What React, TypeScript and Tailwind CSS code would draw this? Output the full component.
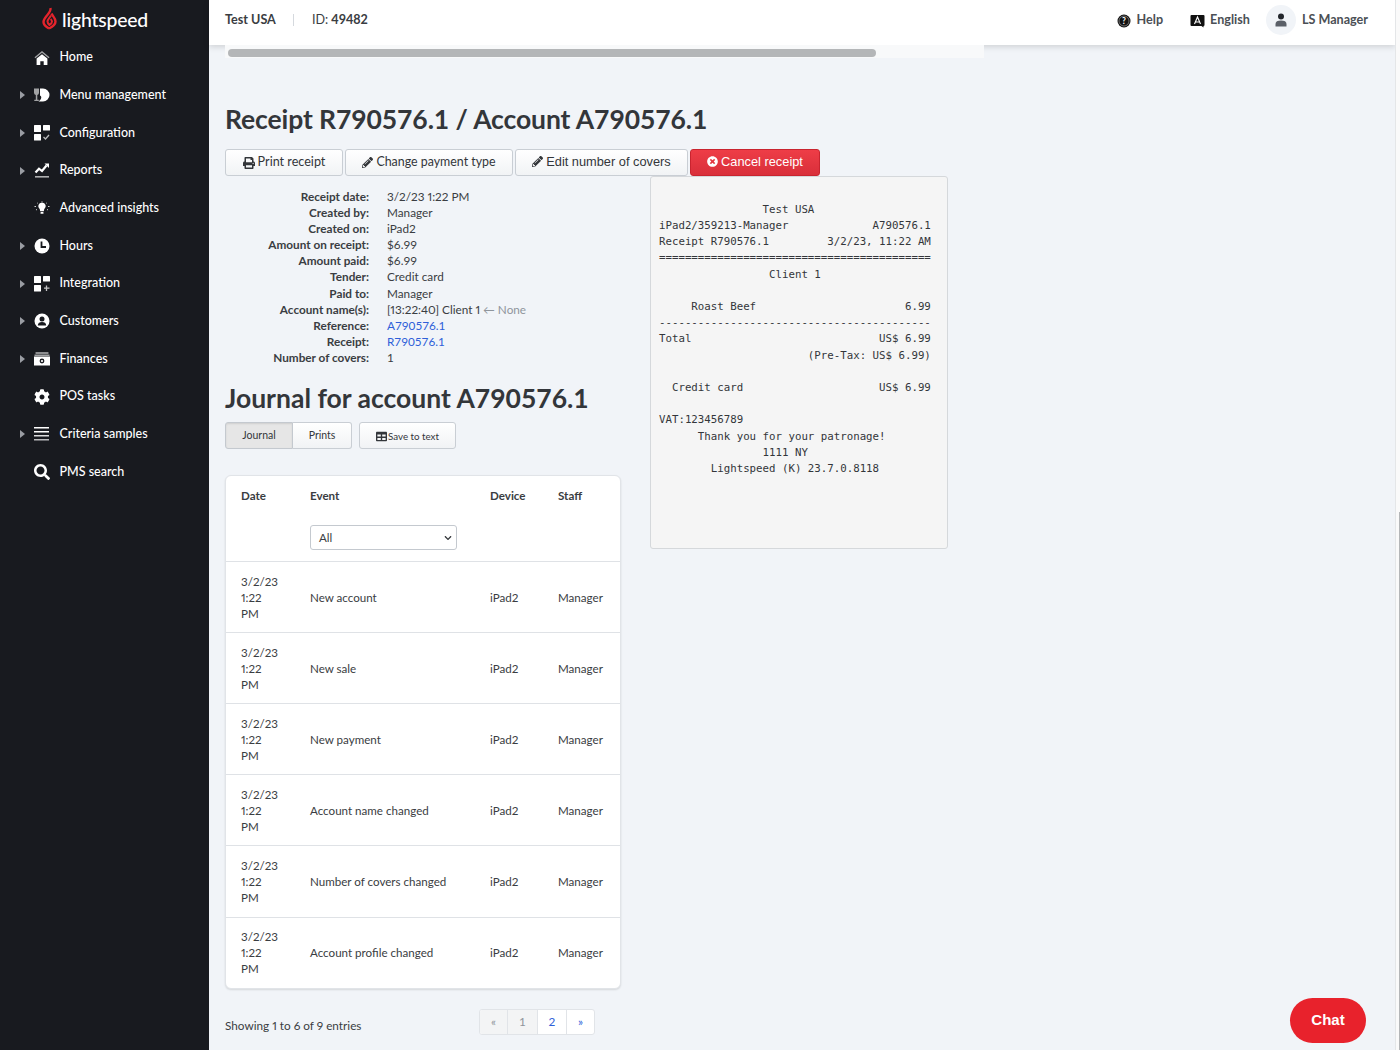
import { FaPencilAlt, FaPrint, FaSearch, FaTable, FaTimesCircle, FaCog, FaChevronDown } from "react-icons/fa";

const SANS = "font-['Lato','Noto_Sans',sans-serif]";

/* sidebar icons that no package has in this shape */
function HomeIcon() {
  return (
    <svg width="16" height="14" viewBox="0 0 16 14" fill="currentColor">
      <path d="M8 0L.5 6.200l.9 1L8 1.800l6.600 5.400.9-1z" opacity="0.6" />
      <path d="M8 3.200L2.600 7.600V14h3.700v-3.800h3.400V14h3.700V7.600z" />
    </svg>
  );
}

function MenuIcon() {
  return (
    <svg width="16" height="14" viewBox="0 0 16 14" fill="currentColor">
      <path d="M0 .500h5v4.200a2.500 2.500 0 0 1-1.700 2.300v4.800h1.500v1.200H.3v-1.200h1.500V7A2.500 2.500 0 0 1 0 4.700z" opacity="0.6" />
      <path d="M6 .500h3a6.500 6.500 0 0 1 0 13H4.500c1.300-.7 2.400-2 2.700-3.500.3-1.200-.2-2-1.200-2.500z" />
    </svg>
  );
}

function ConfigIcon() {
  return (
    <svg width="16" height="16" viewBox="0 0 16 16" fill="currentColor">
      <rect x="0" y="0" width="7" height="7" rx="0.5" />
      <rect x="9" y="0" width="7" height="5.500" rx="0.5" />
      <rect x="0" y="9" width="7" height="6.500" rx="0.5" />
      <path d="M9.500 12l2 2 3.500-4" fill="none" stroke="currentColor" strokeWidth="1.300" opacity="0.7" />
    </svg>
  );
}

function ReportsIcon() {
  return (
    <svg width="16" height="16" viewBox="0 0 16 16" fill="currentColor">
      <path d="M1.500 9.500l3.500-3.800 3 2.300 4.500-5.500" fill="none" stroke="currentColor" strokeWidth="2.200" />
      <path d="M10.500 .5h4.500v4.500z" />
      <rect x="1" y="13" width="14" height="1.600" opacity="0.65" />
    </svg>
  );
}

function InsightsIcon() {
  return (
    <svg width="16" height="14" viewBox="0 0 16 14" fill="currentColor">
      <path d="M8 1.500a3.700 3.700 0 0 1 2.200 6.700l-.4 2H6.200l-.4-2A3.700 3.700 0 0 1 8 1.500z" />
      <rect x="6.500" y="11" width="3" height="1.800" rx="0.5" />
      <path d="M8 0v.7M3 1.700l.7.6M13 1.700l-.7.6M.5 5.500h1.500M14 5.500h1.500M2 9l1-.6M14 9l-1-.6" stroke="currentColor" strokeWidth="0.8" />
    </svg>
  );
}

function ClockIcon() {
  return (
    <svg width="16" height="16" viewBox="0 0 16 16">
      <circle cx="8" cy="8" r="7.500" fill="currentColor" />
      <path d="M7.500 3.500V9h4.500" fill="none" stroke="#181a1f" strokeWidth="1.800" />
    </svg>
  );
}

function IntegrationIcon() {
  return (
    <svg width="16" height="16" viewBox="0 0 16 16" fill="currentColor">
      <rect x="0" y="0" width="7" height="7" rx="0.5" />
      <rect x="9" y="0" width="7" height="5.500" rx="0.5" />
      <rect x="0" y="9" width="7" height="6.500" rx="0.5" />
      <path d="M12.500 9.500v5.500M10 12.200h5.500" stroke="currentColor" strokeWidth="1.300" opacity="0.75" />
    </svg>
  );
}

function CustomerIcon() {
  return (
    <svg width="16" height="16" viewBox="0 0 16 16">
      <circle cx="8" cy="8" r="7.500" fill="currentColor" />
      <circle cx="8" cy="6" r="2.500" fill="#181a1f" />
      <path d="M3.800 12.500c0-2.500 1.800-3.500 4.200-3.500s4.200 1 4.200 3.500z" fill="#181a1f" />
    </svg>
  );
}

function FinanceIcon() {
  return (
    <svg width="16" height="14" viewBox="0 0 16 14" fill="currentColor">
      <rect x="1.500" y="0" width="13" height="2" rx="0.5" opacity="0.5" />
      <rect x="0.500" y="2.500" width="15" height="1.500" opacity="0.6" />
      <path fillRule="evenodd" d="M0 4.500h16v9H0zM8 6.600a2.400 2.400 0 1 0 0 4.800 2.400 2.400 0 0 0 0-4.800zm0 1.300a1.100 1.100 0 1 1 0 2.200 1.100 1.100 0 0 1 0-2.200z" />
    </svg>
  );
}

function ListIcon() {
  return (
    <svg width="16" height="14" viewBox="0 0 16 14" fill="currentColor">
      <rect x="0" y="0" width="15" height="1.500" />
      <rect x="0" y="4" width="15" height="1.500" />
      <rect x="0" y="8" width="15" height="1.500" opacity="0.85" />
      <rect x="0" y="12" width="15" height="1.500" opacity="0.7" />
    </svg>
  );
}

const NAV = [
  { label: "Home", icon: <HomeIcon />, caret: false },
  { label: "Menu management", icon: <MenuIcon />, caret: true },
  { label: "Configuration", icon: <ConfigIcon />, caret: true },
  { label: "Reports", icon: <ReportsIcon />, caret: true },
  { label: "Advanced insights", icon: <InsightsIcon />, caret: false },
  { label: "Hours", icon: <ClockIcon />, caret: true },
  { label: "Integration", icon: <IntegrationIcon />, caret: true },
  { label: "Customers", icon: <CustomerIcon />, caret: true },
  { label: "Finances", icon: <FinanceIcon />, caret: true },
  { label: "POS tasks", icon: <FaCog size={16} />, caret: false },
  { label: "Criteria samples", icon: <ListIcon />, caret: true },
  { label: "PMS search", icon: <FaSearch size={16} />, caret: false },
];

const INFO: [string, React.ReactNode][] = [
  ["Receipt date:", <span className="proportional-nums">3/2/23 1:22 PM</span>],
  ["Created by:", "Manager"],
  ["Created on:", "iPad2"],
  ["Amount on receipt:", "$6.99"],
  ["Amount paid:", "$6.99"],
  ["Tender:", "Credit card"],
  ["Paid to:", "Manager"],
  ["Account name(s):", <span className="proportional-nums">[13:22:40] Client 1 <span className="text-[#8f959c]">← None</span></span>],
  ["Reference:", <span className="text-[#2f5fd8]">A790576.1</span>],
  ["Receipt:", <span className="text-[#2f5fd8]">R790576.1</span>],
  ["Number of covers:", "1"],
];

const EVENTS = [
  "New account",
  "New sale",
  "New payment",
  "Account name changed",
  "Number of covers changed",
  "Account profile changed",
];

const RECEIPT = `                Test USA
iPad2/359213-Manager             A790576.1
Receipt R790576.1         3/2/23, 11:22 AM
==========================================
                 Client 1

     Roast Beef                       6.99
------------------------------------------
Total                             US$ 6.99
                       (Pre-Tax: US$ 6.99)

  Credit card                     US$ 6.99

VAT:123456789
      Thank you for your patronage!
                1111 NY
        Lightspeed (K) 23.7.0.8118`;

function Sidebar() {
  return (
    <aside className="w-[209px] shrink-0 bg-[#181a1f] text-white">
      <div className="flex h-[38.700px] items-center pl-[42px]">
        <svg width="15" height="23" viewBox="0 0 15 23" fill="none" stroke="#e4242c" strokeLinejoin="round" className="mt-[-1px] shrink-0">
          <path d="M8.500 1C9 4 7 6 4.500 9 2.500 11.500 1.500 13 1.500 15c0 2.500 2 4.500 5.500 6.500" strokeWidth="2.400" />
          <path d="M7 21.500c4-2 6.500-4 6.500-7 0-3.500-3-5.500-4-8" strokeWidth="2.400" />
          <path d="M9 8.500C7.500 11 5.500 12.500 5.500 14.500c0 1.500 1 2.500 2 3.500 1.500-1 2.500-2 2.500-3.500 0-1-.7-1.800-1.300-2.500" strokeWidth="2" />
        </svg>
        <span className={`${SANS} ml-[5px] text-[19.400px] leading-none font-medium tracking-[-0.2px]`}>lightspeed</span>
      </div>
      <nav>
        {NAV.map((item) => (
          <div key={item.label} className="flex h-[37.700px] items-center">
            <span className="flex w-[33px] justify-start pl-[20px] text-[#9a9da3]">
              {item.caret && (
                <svg width="5" height="8" viewBox="0 0 5 8" fill="currentColor">
                  <path d="M0 0l5 4-5 4z" />
                </svg>
              )}
            </span>
            <span className="flex w-[17px] justify-center">{item.icon}</span>
            <span className={`${SANS} ml-[9.500px] text-[12.500px] font-medium`}>{item.label}</span>
          </div>
        ))}
      </nav>
    </aside>
  );
}

function Topbar() {
  return (
    <header className="flex h-[45px] items-center bg-white pb-[5px] text-[12.600px] text-[#3a3d42] shadow-[0_2px_6px_rgba(0,0,0,0.14)]">
      <span className="ml-4 font-bold">Test USA</span>
      <span className="ml-[17px] h-3 w-px bg-[#d5d9de]" />
      <span className="ml-[18px]">
        ID: <span className="font-bold">49482</span>
      </span>
      <div className="ml-auto flex items-center pr-[27px]">
        <svg width="14" height="14" viewBox="0 0 14 14" className="mr-[6px] mt-[2px]">
          <circle cx="7" cy="7" r="6.500" fill="#111" />
          <circle cx="7" cy="7" r="5" fill="none" stroke="#fff" strokeWidth="0.4" />
          <text x="7" y="10" textAnchor="middle" fontSize="8.500" fontWeight="700" fill="#fff" fontFamily="Lato, sans-serif">?</text>
        </svg>
        <span className="font-bold text-[#4b4f55]">Help</span>
        <svg width="15" height="14" viewBox="0 0 15 14" className="ml-[27px] mr-[5px] mt-[1px]">
          <path d="M1.500 1h12a1 1 0 0 1 1 1v9a1 1 0 0 1-1 1v1.500L11.500 12h-10a1 1 0 0 1-1-1V2a1 1 0 0 1 1-1z" fill="#111" />
          <path d="M4.500 10l3-7 3 7M5.700 8h3.600" fill="none" stroke="#fff" strokeWidth="1.100" />
        </svg>
        <span className="font-bold text-[#4b4f55]">English</span>
        <span className="ml-[16px] mr-[6px] flex h-[30px] w-[30px] items-center justify-center rounded-full bg-[#f1f4f8]">
          <svg width="12" height="14" viewBox="0 0 12 14">
            <circle cx="6" cy="3.500" r="3" fill="#22262c" />
            <path d="M.5 13.500v-2.500c0-2.500 2-3.500 5.500-3.500s5.500 1 5.500 3.500v2.500z" fill="#5b6068" />
          </svg>
        </span>
        <span className="font-bold text-[#4b4f55]">LS Manager</span>
      </div>
    </header>
  );
}

function ActionButton({ children, className = "" }: { children: React.ReactNode; className?: string }) {
  return (
    <button className={`flex h-[27px] items-center justify-center gap-[3px] rounded-[3px] border bg-gradient-to-b ${className}`}>
      {children}
    </button>
  );
}

function JournalTable() {
  return (
    <div className="mt-[26px] w-[396px] rounded-[6px] border border-[#e1e4e8] bg-white text-[11.600px] text-[#3a3d42] shadow-[0_1px_2px_rgba(0,0,0,0.12)]">
      <div className="grid h-[85px] grid-cols-[69px_180px_68px_1fr] pl-[15px] pt-[12px] font-bold leading-4">
        <span>Date</span>
        <div>
          <div>Event</div>
          <div className="mt-[21px] flex h-[25px] w-[147px] items-center justify-between rounded-[3px] border border-[#c4c9cf] bg-white pl-2 pr-[3px] font-normal">
            All
            <FaChevronDown size={8} className="mr-[1px] text-[#33363a]" />
          </div>
        </div>
        <span>Device</span>
        <span>Staff</span>
      </div>
      {EVENTS.map((event) => (
        <div key={event} className="grid h-[71.100px] grid-cols-[69px_180px_68px_1fr] items-center border-t border-[#dfe2e6] pl-[15px] pt-px leading-[16px]">
          <span className="proportional-nums">
            3/2/23
            <br />
            1:22
            <br />
            PM
          </span>
          <span>{event}</span>
          <span>iPad2</span>
          <span>Manager</span>
        </div>
      ))}
    </div>
  );
}

export default function App() {
  return (
    <div className={`${SANS} relative flex h-[1050px] w-[1400px] overflow-hidden bg-[#f1f4f8]`}>
      <Sidebar />
      <main className="min-w-0 flex-1">
        <Topbar />
        <div className="ml-4 h-[13px] w-[759px] bg-[#f8f9fa] pl-[3px] pt-[4px]">
          <div className="h-2 w-[648px] rounded-full bg-[#b4b6b8]" />
        </div>
        <h1 className="mt-[44px] ml-4 text-[26.500px] leading-[34px] font-bold tracking-[-0.1px] text-[#33363a]">
          Receipt R790576.1 / Account A790576.1
        </h1>
        <div className="mt-[13px] ml-4 flex gap-[2px]">
          <ActionButton className="w-[118px] border-[#c9ced4] from-white to-[#f1f3f5] text-[12.600px] text-[#33363a]"><FaPrint size={12} />Print receipt</ActionButton>
          <ActionButton className="w-[168px] border-[#c9ced4] from-white to-[#f1f3f5] text-[12.400px] text-[#33363a]"><FaPencilAlt size={11} />Change payment type</ActionButton>
          <ActionButton className="w-[173px] border-[#c9ced4] from-white to-[#f1f3f5] pb-[2px] font-['Liberation_Sans',sans-serif] text-[12.800px] text-[#33363a]"><FaPencilAlt size={11} />Edit number of covers</ActionButton>
          <ActionButton className="w-[130px] border-[#c9242f] from-[#ee3d47] to-[#d92f3a] pb-[2px] font-['Liberation_Sans',sans-serif] text-[12.800px] text-white"><FaTimesCircle size={11} />Cancel receipt</ActionButton>
        </div>
        <div className="ml-4 flex items-start">
          <div className="w-[396px]">
            <dl className="mt-[13px] text-[11.750px] leading-[16.100px] text-[#3a3d42]">
              {INFO.map(([label, value]) => (
                <div key={label} className="flex">
                  <dt className="w-[144px] text-right font-bold">{label}</dt>
                  <dd className="ml-[18px]">{value}</dd>
                </div>
              ))}
            </dl>
            <h2 className="mt-[15px] text-[26.500px] leading-[34px] font-bold text-[#33363a]">Journal for account A790576.1</h2>
            <div className="mt-[7px] flex">
              <button className="h-[27px] w-[68px] rounded-l-[3px] border border-[#c4c9cf] bg-[#e6e6e6] pt-px text-[10.500px] text-[#33363a] shadow-[inset_0_1px_2px_rgba(0,0,0,0.1)]">Journal</button>
              <button className="h-[27px] w-[59px] rounded-r-[3px] border border-l-0 border-[#c9ced4] bg-gradient-to-b from-white to-[#f1f3f5] pt-px text-[10.500px] text-[#33363a]">Prints</button>
              <button className="ml-[7px] flex h-[27px] w-[97px] items-center justify-center gap-px rounded-[3px] border border-[#c9ced4] bg-gradient-to-b from-white to-[#f1f3f5] pt-px text-[9.750px] text-[#33363a]"><FaTable size={11} />Save to text</button>
            </div>
            <JournalTable />
            <div className="mt-[20.500px] flex items-start text-[11.750px] text-[#3a3d42]">
              <span className="mt-[8px] proportional-nums">Showing 1 to 6 of 9 entries</span>
              <div className="ml-auto mr-[26px] flex h-[26px] overflow-hidden rounded-[3px] border border-[#e1e4e8] bg-white text-center leading-[24px]">
                <span className="w-[27px] bg-[#f3f4f5] text-[#8f959c]">«</span>
                <span className="w-[30px] border-l border-[#e1e4e8] bg-[#f3f4f5] text-[#8f959c]">1</span>
                <span className="w-[29px] border-l border-[#e1e4e8] text-[#2f5fd8]">2</span>
                <span className="w-[28px] border-l border-[#e1e4e8] text-[#2f5fd8]">»</span>
              </div>
            </div>
          </div>
          <pre className="ml-[29px] h-[373px] w-[298px] shrink-0 rounded-[3px] border border-[#d5d8db] bg-[#f5f5f5] pt-[24.700px] pl-2 font-['DejaVu_Sans_Mono',monospace] text-[10.750px] leading-[16.200px] text-[#33363a]">
            {RECEIPT}
          </pre>
        </div>
      </main>
      {/* page scrollbar */}
      <div className="w-[5px] shrink-0 border-l border-[#e4e6e8] bg-[#fafafa] pt-[512px]">
        <div className="ml-auto h-[538px] w-px bg-[#b4b6b8]" />
      </div>
      <button className="absolute top-[998px] left-[1290px] h-[45px] w-[76px] rounded-full bg-[#e8222c] font-['Liberation_Sans',sans-serif] text-[15px] font-bold text-white">
        Chat
      </button>
    </div>
  );
}
